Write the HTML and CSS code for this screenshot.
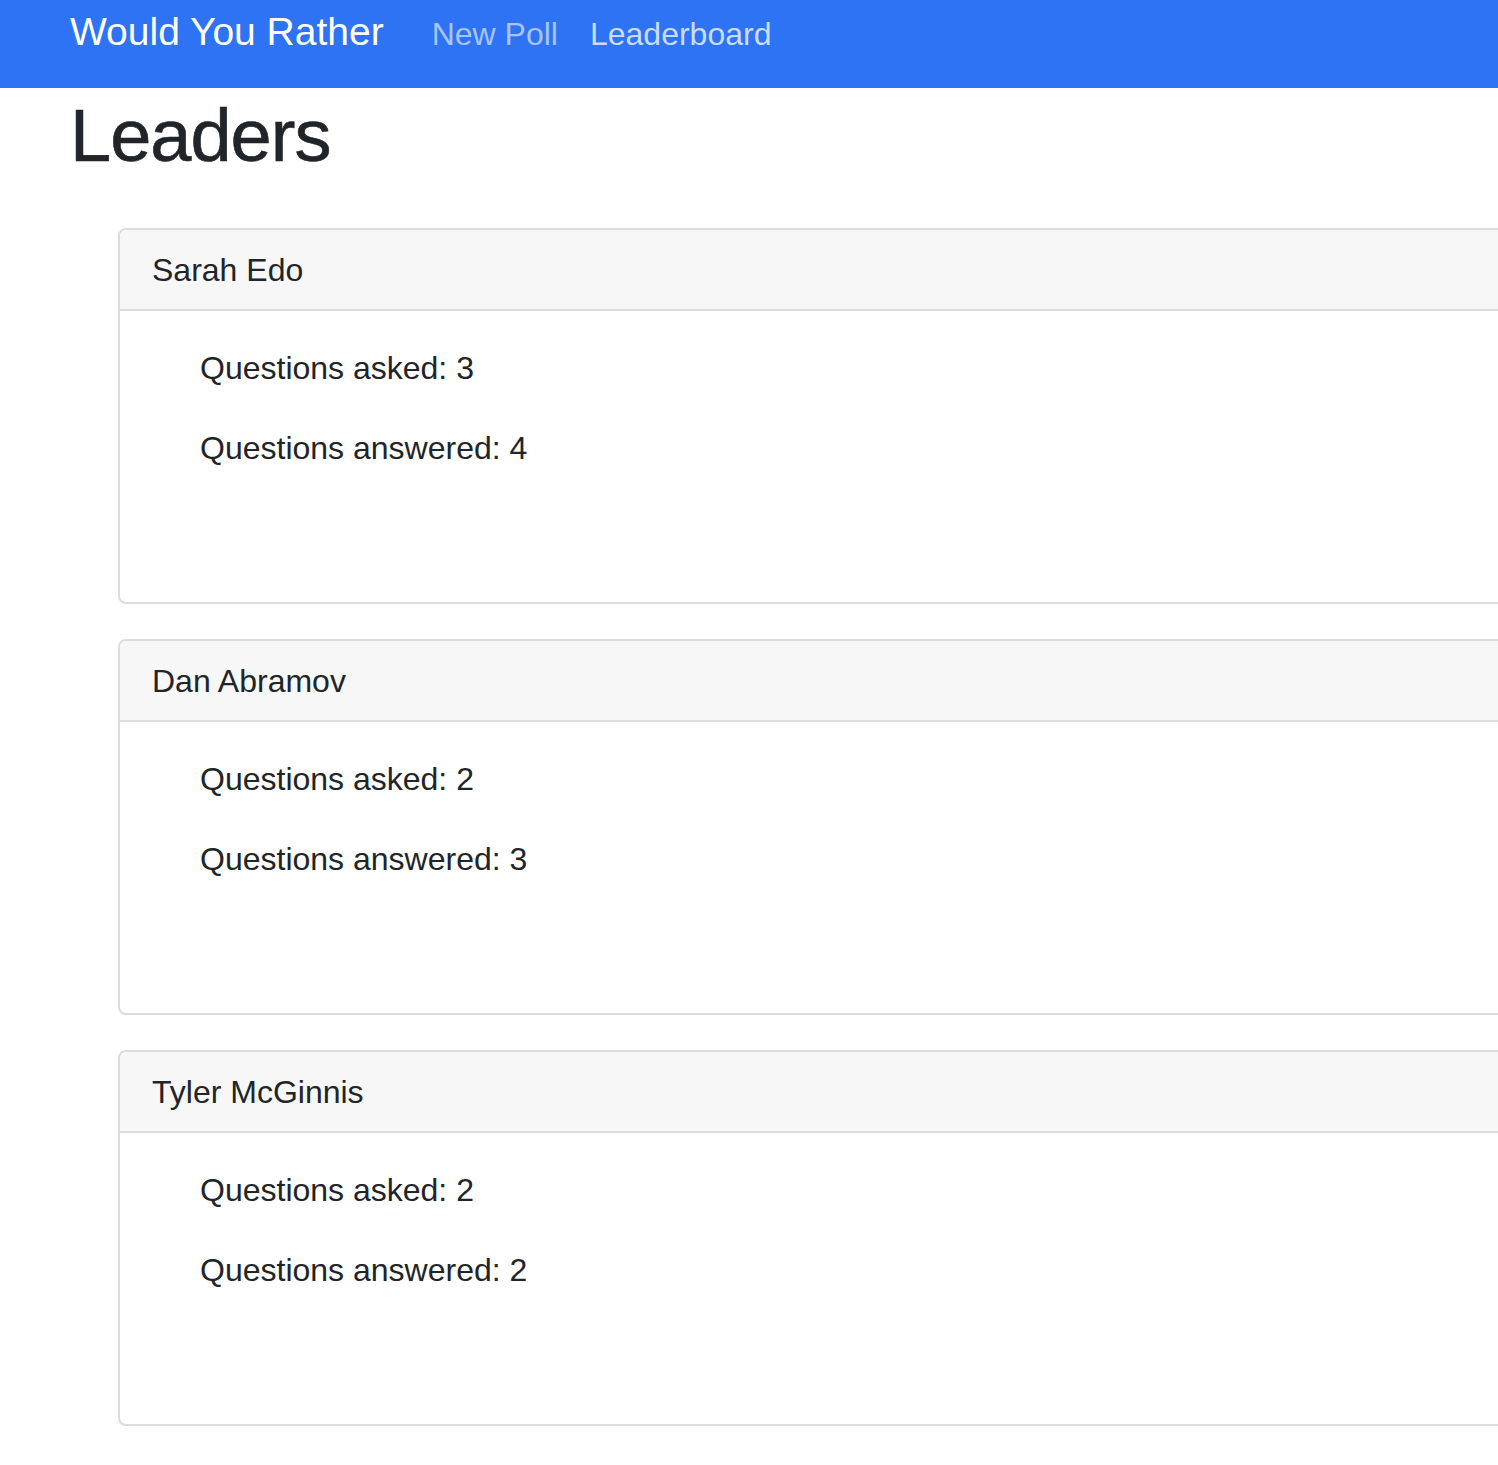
FILE: index.html
```html
<!DOCTYPE html>
<html lang="en">
<head>
<meta charset="utf-8">
<title>Would You Rather</title>
<link rel="stylesheet" href="styles.css">
</head>
<body>
<div class="page">
  <nav class="navbar">
    <a class="brand" href="#">Would You Rather</a>
    <a class="nav-link" href="#">New Poll</a>
    <a class="nav-link active" href="#">Leaderboard</a>
  </nav>
  <main class="content">
    <h1 class="title">Leaders</h1>
    <section class="cards">
      <div class="card">
        <div class="card-header">Sarah Edo</div>
        <div class="card-body">
          <p class="stat">Questions asked: 3</p>
          <p class="stat">Questions answered: 4</p>
        </div>
      </div>
      <div class="card">
        <div class="card-header">Dan Abramov</div>
        <div class="card-body">
          <p class="stat">Questions asked: 2</p>
          <p class="stat">Questions answered: 3</p>
        </div>
      </div>
      <div class="card">
        <div class="card-header">Tyler McGinnis</div>
        <div class="card-body">
          <p class="stat">Questions asked: 2</p>
          <p class="stat">Questions answered: 2</p>
        </div>
      </div>
    </section>
  </main>
</div>
</body>
</html>
```

FILE: styles.css
```css
html, body {
  margin: 0;
  padding: 0;
  background: #ffffff;
}

body {
  font-family: "Liberation Sans", Arial, sans-serif;
  color: #212529;
}

.page {
  width: 1498px;
  min-height: 1465px;
  overflow: hidden;
}

.navbar {
  height: 88px;
  box-sizing: border-box;
  background: #2e73f4;
  display: flex;
  align-items: baseline;
  padding: 2px 0 0 70px;
}

.navbar a {
  text-decoration: none;
}

.brand {
  color: #ffffff;
  font-size: 39px;
  line-height: 60px;
  margin-right: 32px;
}

.nav-link {
  color: #a7c4f9;
  font-size: 32px;
  line-height: 48px;
  padding: 0 16px;
}

.nav-link.active {
  color: #cadcfb;
}

.content {
  padding-left: 70px;
}

.title {
  margin: 4px 0 48px 0;
  font-size: 74px;
  line-height: 88px;
  font-weight: 400;
  letter-spacing: -1px;
  -webkit-text-stroke: 0.6px #212529;
}

.cards {
  margin-left: 48px;
  display: flex;
  flex-direction: column;
  gap: 35px;
}

.card {
  width: 1440px;
  border: 2px solid #dcdcdc;
  border-radius: 8px;
  overflow: hidden;
}

.card-header {
  background: #f7f7f7;
  border-bottom: 2px solid #dcdcdc;
  padding: 16px 33px 15px 32px;
  font-size: 32px;
  line-height: 48px;
}

.card-body {
  height: 291px;
  box-sizing: border-box;
  padding: 33px 0 0 80px;
}

.stat {
  margin: 0 0 32px 0;
  font-size: 32px;
  line-height: 48px;
}
```
